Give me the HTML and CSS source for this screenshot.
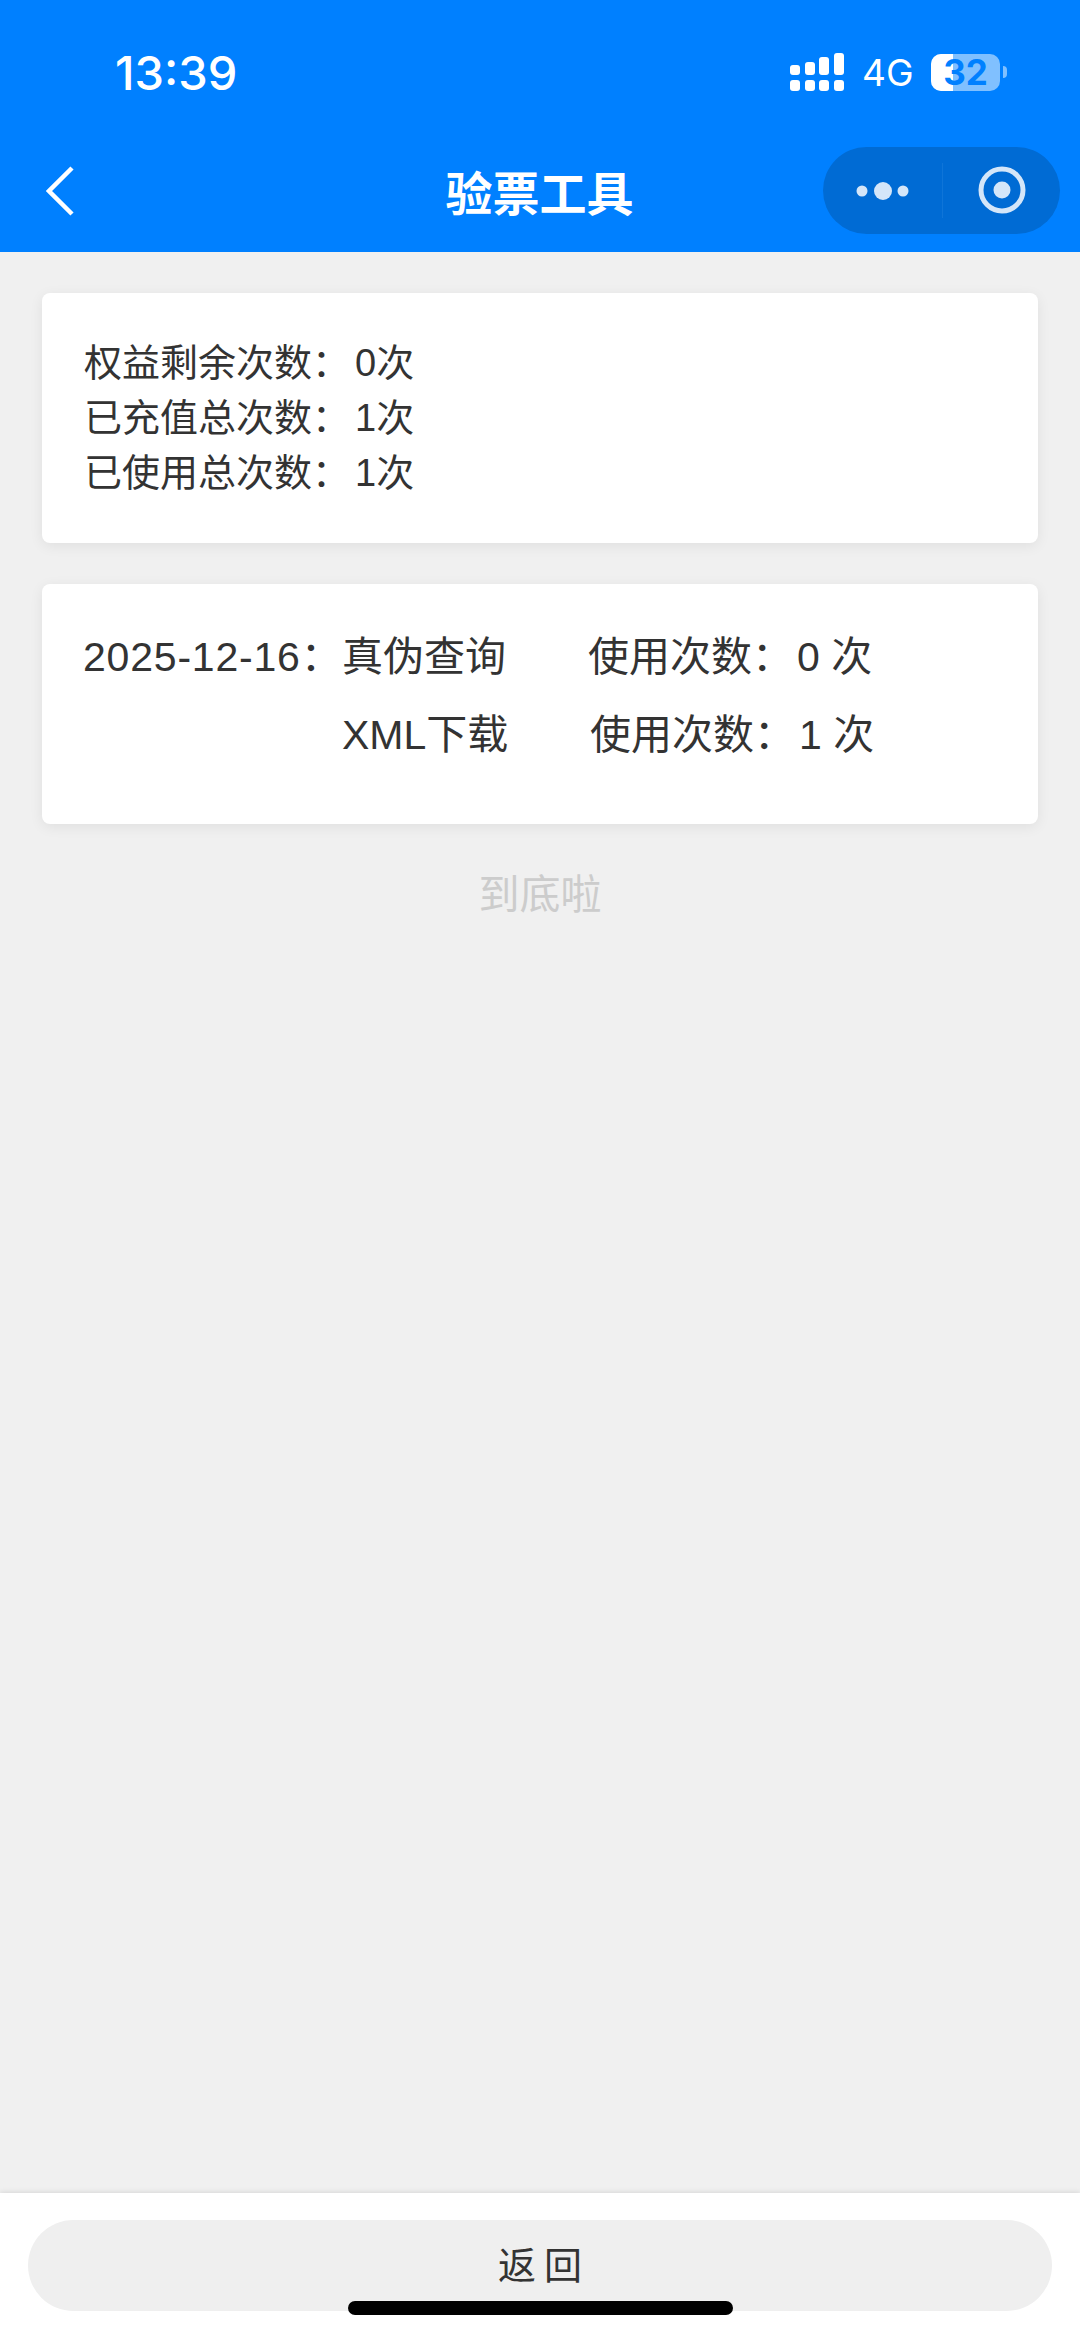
FILE: index.html
```html
<!DOCTYPE html>
<html>
  <head>
    <title>验票工具</title>
    <link rel="stylesheet" href="styles.css">
  </head>
  <body>
    <div class="page">
      <header class="header">
        <div class="status-bar">
          <span class="time">13:39</span>
          <div class="status-right">
            <svg class="signal" width="54" height="38" viewBox="0 0 54 38">
              <rect x="0" y="12" width="10" height="10" rx="3" />
              <rect x="15" y="9" width="10" height="13" rx="3" />
              <rect x="29" y="4" width="10" height="18" rx="3" />
              <rect x="44" y="0" width="10" height="22" rx="3" />
              <rect x="0" y="27" width="10" height="11" rx="3" />
              <rect x="15" y="27" width="10" height="11" rx="3" />
              <rect x="29" y="27" width="10" height="11" rx="3" />
              <rect x="44" y="27" width="10" height="11" rx="3" />
            </svg>
            <span class="network">4G</span>
            <div class="battery">
              <div class="battery-fill"></div>
              <span class="battery-text">32</span>
            </div>
            <div class="battery-cap"></div>
          </div>
        </div>
        <div class="nav-bar">
          <svg class="back" width="30" height="52" viewBox="0 0 30 52">
            <path d="M26 3 L3 26 L26 49" />
          </svg>
          <h1 class="title">验票工具</h1>
          <div class="capsule">
            <svg class="capsule-more" width="119" height="87" viewBox="0 0 119 87">
              <circle cx="39" cy="44" r="5.5" />
              <circle cx="60" cy="44" r="9" />
              <circle cx="80" cy="44" r="5.5" />
            </svg>
            <div class="capsule-line"></div>
            <svg class="capsule-close" width="117" height="87" viewBox="0 0 117 87">
              <circle class="ring" cx="59" cy="43" r="21" />
              <circle cx="59" cy="43" r="8.5" />
            </svg>
          </div>
        </div>
      </header>

      <main class="content">
        <section class="card summary">
          <div>权益剩余次数：<span class="value">0次</span></div>
          <div>已充值总次数：<span class="value">1次</span></div>
          <div>已使用总次数：<span class="value">1次</span></div>
        </section>
        <section class="card usage">
          <div class="date">2025-12-16：</div>
          <div>真伪查询</div>
          <div class="count">使用次数：<span class="num">0 次</span></div>
          <div></div>
          <div>XML下载</div>
          <div class="count second">使用次数：<span class="num">1 次</span></div>
        </section>
        <div class="end-tip">到底啦</div>
      </main>

      <footer class="footer">
        <button class="back-btn" type="button">返回</button>
      </footer>
      <div class="home-bar"></div>
    </div>
  </body>
</html>
```

FILE: styles.css
```css
* {
  box-sizing: border-box;
}
html,
body {
  margin: 0;
  padding: 0;
}
body {
  font-family: "Liberation Sans", "Noto Sans CJK SC", sans-serif;
  background-color: #f0f0f0;
  color: #333;
}
.page {
  position: relative;
  display: flex;
  flex-direction: column;
  width: 1080px;
  height: 2337px;
  overflow: hidden;
}

/* header */
.header {
  height: 252px;
  background-color: #0080ff;
  color: #fff;
}
.status-bar {
  display: flex;
  justify-content: space-between;
  align-items: center;
  height: 144px;
  padding: 0 73px 0 115px;
}
.time {
  font-family: Inter, sans-serif;
  font-size: 47px;
  font-weight: 500;
}
.status-right {
  display: flex;
  align-items: center;
}
.signal {
  fill: #fff;
  margin-right: 18px;
}
.network {
  width: 69px;
  font-family: Inter, sans-serif;
  font-size: 37px;
}
.battery {
  position: relative;
  display: flex;
  justify-content: center;
  align-items: center;
  width: 69px;
  height: 37px;
  border-radius: 10px;
  background-color: rgba(255, 255, 255, 0.5);
}
.battery-fill {
  position: absolute;
  top: 0;
  left: 0;
  width: 22px;
  height: 100%;
  border-radius: 10px 0 0 10px;
  background-color: #fff;
}
.battery-text {
  position: relative;
  font-family: Inter, sans-serif;
  font-size: 35px;
  font-weight: 700;
  line-height: 1;
  color: #0080ff;
}
.battery-cap {
  width: 4px;
  height: 12px;
  margin-left: 3px;
  border-radius: 0 6px 6px 0;
  background-color: rgba(255, 255, 255, 0.5);
}
.nav-bar {
  position: relative;
  display: flex;
  justify-content: center;
  align-items: center;
  height: 92px;
}
.back {
  position: absolute;
  top: 21px;
  left: 46px;
  fill: none;
  stroke: #fff;
  stroke-width: 4.5;
}
.title {
  margin: 0 0 0 -1px;
  font-size: 47px;
  font-weight: 700;
}
.capsule {
  position: absolute;
  top: 3px;
  left: 823px;
  display: flex;
  align-items: center;
  width: 237px;
  height: 87px;
  border-radius: 44px;
  background-color: #006bd4;
}
.capsule svg {
  fill: #d4e6f9;
}
.capsule-line {
  width: 1px;
  height: 55px;
  background-color: #0f75d8;
}
.capsule .ring {
  fill: none;
  stroke: #d4e6f9;
  stroke-width: 5;
}

/* cards */
.content {
  flex: 1;
  padding: 41px 42px 0;
}
.card {
  border-radius: 8px;
  background-color: #fff;
  box-shadow: 0 3px 14px rgba(0, 0, 0, 0.07);
}
.summary {
  height: 250px;
  margin-bottom: 41px;
  padding: 43px 42px 0;
  font-size: 38px;
  line-height: 55px;
}
.value {
  margin-left: 5px;
}
.usage {
  display: grid;
  grid-template-columns: 259px 246px 1fr;
  grid-auto-rows: 78px;
  align-items: center;
  height: 240px;
  padding: 30px 41px 0;
  font-size: 41px;
}
.date {
  letter-spacing: 0.8px;
  white-space: nowrap;
}
.count.second {
  margin-left: 2px;
}
.num {
  margin-left: 4px;
}
.end-tip {
  margin-top: 47px;
  font-size: 41px;
  line-height: 48px;
  text-align: center;
  color: #ccc;
}

/* footer */
.footer {
  height: 144px;
  padding: 27px 28px 0;
  background-color: #fff;
  box-shadow: 0 -1px 5px rgba(0, 0, 0, 0.1);
}
.back-btn {
  display: block;
  width: 100%;
  height: 91px;
  padding: 0 0 6px 8px;
  border: none;
  border-radius: 46px;
  background-color: #efefef;
  font-family: "Liberation Sans", "Noto Sans CJK SC", sans-serif;
  font-size: 38px;
  letter-spacing: 8px;
  color: #333;
}
.home-bar {
  position: absolute;
  left: 348px;
  bottom: 22px;
  width: 385px;
  height: 14px;
  border-radius: 7px;
  background-color: #000;
}
```
